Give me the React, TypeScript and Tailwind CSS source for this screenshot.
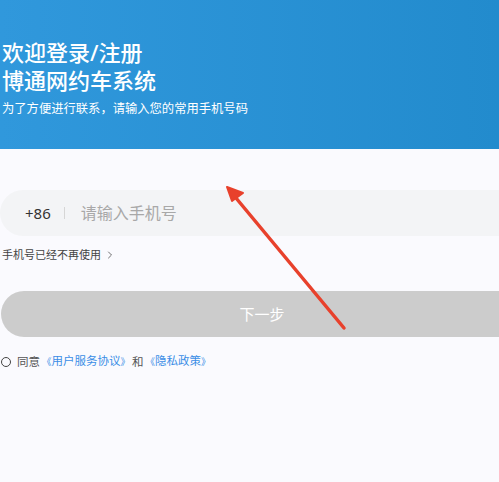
import { ChevronRight } from "lucide-react";

const font = { fontFamily: '"Noto Sans", "Noto Sans CJK SC", sans-serif' };

const Arrow = () => (
  <svg
    className="pointer-events-none absolute left-0 top-0"
    width="499"
    height="482"
    viewBox="0 0 499 482"
  >
    <line x1="344" y1="328" x2="236" y2="198" stroke="#e8412c" strokeWidth="3.5" strokeLinecap="round" />
    <polygon points="227,187 243,193 232,201" fill="#e8412c" stroke="#e8412c" strokeWidth="2" strokeLinejoin="round" />
  </svg>
);

const Link = ({ text }: { text: string }) => (
  <span className="shrink-0 whitespace-nowrap text-[#3a8ee6]">
    <span className="text-[9.5px]">《</span>
    {text}
    <span className="text-[9.5px]">》</span>
  </span>
);

export default function App() {
  return (
    <div className="relative h-[482px] w-[499px] overflow-hidden bg-[#fafafe]" style={font}>
      <div className="h-[149px] bg-gradient-to-r from-[#3098dc] to-[#228bcd] pl-[2px] pt-[38px] text-white">
        <h1 className="text-[22px] font-medium leading-[28px]">欢迎登录/注册</h1>
        <h1 className="text-[22px] font-medium leading-[28px]">博通网约车系统</h1>
        <p className="mt-[6px] text-[12.3px] leading-[18px]">为了方便进行联系，请输入您的常用手机号码</p>
      </div>

      <div className="mt-[41px] flex h-[46px] w-[522px] items-center rounded-full bg-[#f3f4f6] pl-[25px]">
        <span className="text-[15px] text-[#333]">+86</span>
        <span className="ml-[13px] h-[12px] w-px bg-[#d6d6d6]" />
        <span className="ml-[16px] text-[16px] text-[#a8a8a8]">请输入手机号</span>
      </div>

      <div className="mt-[11px] flex items-center pl-[2px] text-[11px] leading-[16px] text-[#444]">
        手机号已经不再使用
        <ChevronRight className="ml-[3px] h-[12px] w-[12px]" strokeWidth={1.5} />
      </div>

      <button className="mt-[28px] ml-[1px] flex h-[46px] w-[522px] items-center justify-center rounded-full bg-[#cccccc] text-[15px] text-white">
        下一步
      </button>

      <div className="mt-[16px] flex items-center whitespace-nowrap pl-[1px] text-[11.5px] leading-[16px] text-[#555]">
        <span className="h-[10px] w-[10px] shrink-0 rounded-full border border-[#444]" />
        <span className="ml-[6px] mr-[2px]">同意</span>
        <Link text="用户服务协议" />
        <span className="mx-[2px]">和</span>
        <Link text="隐私政策" />
      </div>

      <Arrow />
    </div>
  );
}
